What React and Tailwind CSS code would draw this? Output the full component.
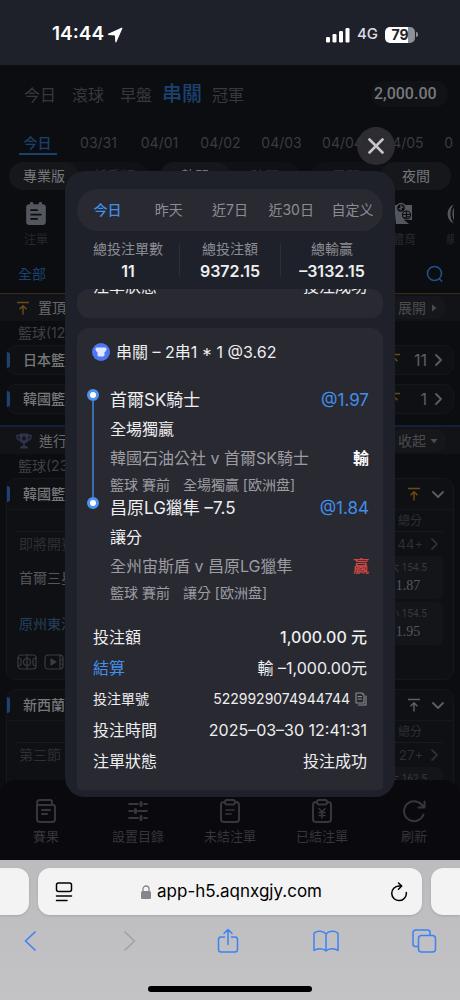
import React from "react";

const stroke = { fill: "none", stroke: "currentColor", strokeLinecap: "round", strokeLinejoin: "round" };

/* ---------- icons ---------- */

function LocationArrow() {
  return (
    <svg viewBox="0 0 16 16" className="h-4 w-4" fill="currentColor" aria-hidden="true">
      <path stroke="currentColor" strokeWidth="1.200" strokeLinejoin="round" d="M14.800 1.200 1.500 7.300l6.900.6.500 6.900z" />
    </svg>
  );
}

function Signal() {
  return (
    <svg viewBox="0 0 24 16" className="h-4 w-6" fill="currentColor" aria-hidden="true">
      <rect x="0" y="10" width="4" height="5.500" rx="1.200" />
      <rect x="6.500" y="7" width="4" height="8.500" rx="1.200" />
      <rect x="13" y="4" width="4" height="11.500" rx="1.200" />
      <rect x="19.500" y="1" width="4" height="14.500" rx="1.200" />
    </svg>
  );
}

function Close() {
  return (
    <svg viewBox="0 0 16 16" className="h-4 w-4" {...stroke} strokeWidth="2.600" aria-hidden="true">
      <path d="M1.500 1.500l13 13M14.500 1.500l-13 13" />
    </svg>
  );
}

function PinTop({ className = "" }) {
  return (
    <svg viewBox="0 0 14 14" className={`h-3.5 w-3.5 ${className}`} {...stroke} strokeLinecap="butt" strokeWidth="1.500" aria-hidden="true">
      <path d="M1 1.500h12M7 13.500V5M3.500 8.200 7 4.700l3.500 3.500" />
    </svg>
  );
}

function Chevron({ dir = "right", className = "" }) {
  const d = dir === "right" ? "M5 2l5 5-5 5" : "M2 5l5 5 5-5";
  return (
    <svg viewBox="0 0 14 14" className={`h-3.5 w-3.5 ${className}`} {...stroke} strokeWidth="1.800" aria-hidden="true">
      <path d={d} />
    </svg>
  );
}

function Trophy() {
  return (
    <svg viewBox="0 0 16 16" className="h-4 w-4 text-[#30344a]" aria-hidden="true">
      <path fill="currentColor" d="M3.500.5h9V6a4.500 4.500 0 0 1-3.600 4.400V13H11l1 2.500H4L5 13h2.100v-2.600A4.500 4.500 0 0 1 3.500 6z" />
      <path {...stroke} strokeWidth="1.400" d="M3.500 2.500H.8C.8 5.500 2 7.200 4 7.400M12.500 2.500h2.700c0 3-1.200 4.700-3.200 4.900" />
      <path fill="#121317" d="M8 2.600l.8 1.700 1.800.2-1.300 1.200.4 1.800L8 6.600l-1.700.9.4-1.800-1.300-1.200 1.800-.2z" />
    </svg>
  );
}

function NoteIcon() {
  return (
    <svg viewBox="0 0 20 22" className="h-6 w-6" aria-hidden="true">
      <rect x="1" y="2" width="18" height="19" rx="3" fill="currentColor" />
      <rect x="4.500" y="0" width="3" height="4" rx="1.200" fill="currentColor" />
      <rect x="12.500" y="0" width="3" height="4" rx="1.200" fill="currentColor" />
      <path {...stroke} stroke="#0b0d11" strokeWidth="1.600" d="M5.500 7.500H11M5.500 11.500h9M5.500 15.500H11" />
    </svg>
  );
}

function EsportsIcon() {
  return (
    <svg viewBox="0 0 24 24" className="h-6 w-6" aria-hidden="true">
      <path fill="currentColor" d="M2 3h18v15h-8l5 4H4z" />
      <circle cx="9" cy="6" r="4.500" fill="#0b0d11" stroke="currentColor" strokeWidth="1.400" />
      <circle cx="14.500" cy="13" r="4" fill="none" stroke="#0b0d11" strokeWidth="1.200" />
      <path {...stroke} stroke="#0b0d11" strokeWidth="1.100" d="M10.500 12.500h8M14.500 9.500v7M12 15.500l5-1" />
      <path {...stroke} strokeWidth="1.200" d="M7 7l4-2M9 3v5" />
    </svg>
  );
}

function TennisIcon() {
  return (
    <svg viewBox="0 0 24 24" className="h-6 w-6" aria-hidden="true">
      <circle cx="12" cy="12" r="10.500" fill="currentColor" />
      <path {...stroke} stroke="#0b0d11" strokeWidth="2" d="M8.500 2.500c-4 6-4 13 0 19M15 2c4 6 4 14 0 20" />
    </svg>
  );
}

function Search() {
  return (
    <svg viewBox="0 0 18 18" className="h-[18px] w-[18px]" {...stroke} strokeWidth="1.600" aria-hidden="true">
      <circle cx="8.500" cy="8.500" r="7" />
      <path d="M13.500 14l2.200 2.200" />
    </svg>
  );
}

function CourtIcon() {
  return (
    <svg viewBox="0 0 20 16" className="h-4 w-5" {...stroke} strokeWidth="1.200" aria-hidden="true">
      <rect x="1" y="1" width="18" height="14" rx="3" />
      <circle cx="10" cy="8" r="3.500" />
      <path d="M10 1v14M1 4.500h1.500a1.500 1.500 0 0 1 1.500 1.500v4a1.500 1.500 0 0 1-1.500 1.500H1M19 4.500h-1.500A1.500 1.500 0 0 0 16 6v4a1.500 1.500 0 0 0 1.500 1.500H19" />
    </svg>
  );
}

function VideoIcon() {
  return (
    <svg viewBox="0 0 20 16" className="h-4 w-5" {...stroke} strokeWidth="1.200" aria-hidden="true">
      <rect x="1" y="1" width="18" height="14" rx="3" />
      <path fill="currentColor" d="M7 5v6l5-3z" />
      <path d="M16 1v14M16 6h3M16 10h3" />
    </svg>
  );
}

function ResultIcon() {
  return (
    <svg viewBox="0 0 24 26" className="h-[26px] w-6" {...stroke} strokeWidth="2" aria-hidden="true">
      <path d="M3 8V5a3 3 0 0 1 3-3h10a2 2 0 0 1 2 2v2" />
      <path d="M3 7h16a2 2 0 0 1 2 2v12a3 3 0 0 1-3 3H6a3 3 0 0 1-3-3zM8 12h8M8 16h5" />
    </svg>
  );
}

function SlidersIcon() {
  return (
    <svg viewBox="0 0 24 26" className="h-[26px] w-6" {...stroke} strokeWidth="1.800" aria-hidden="true">
      <path d="M3 6h9M18 6h3M3 13h4M12 13h9M3 20h9M18 20h3" />
      <path strokeWidth="3" d="M15 4.500v3M9.500 11.500v3M15 18.500v3" />
    </svg>
  );
}

function ClipboardIcon({ yen = false }) {
  return (
    <svg viewBox="0 0 24 26" className="h-[26px] w-6" {...stroke} strokeWidth="2" aria-hidden="true">
      <path d="M7 4H6a3 3 0 0 0-3 3v14a3 3 0 0 0 3 3h12a3 3 0 0 0 3-3V7a3 3 0 0 0-3-3h-1" />
      <rect x="7" y="2" width="10" height="4.500" rx="2" />
      {yen ? <path strokeWidth="1.500" d="M9 10.500l3 3.500 3-3.500M12 14v6M9 14.500h6M9 17.500h6" /> : <path strokeWidth="1.700" d="M8 12h8M8 16h5" />}
    </svg>
  );
}

function RefreshIcon() {
  return (
    <svg viewBox="0 0 24 26" className="h-[26px] w-6" {...stroke} strokeWidth="2" aria-hidden="true">
      <path d="M21.500 16.500A10 10 0 1 1 19.500 6.500L22 9M22.500 3.500V9.500H16.500" />
    </svg>
  );
}

function ParlayBadge() {
  return (
    <svg viewBox="0 0 18 18" className="h-[18px] w-[18px] shrink-0" aria-hidden="true">
      <circle cx="9" cy="9" r="9" fill="#4e75f2" />
      <path fill="#dfe7ff" d="M5 4.500h8c1.200 0 1.900 1 1.500 2l-.6 1.600c-.2.500-.600.800-1.100.800h-.3v3.200c0 .8-.6 1.400-1.400 1.400H6.900c-.8 0-1.400-.6-1.400-1.400V8.900h-.3c-.5 0-.9-.3-1.100-.8L3.500 6.500c-.4-1 .3-2 1.500-2z" />
    </svg>
  );
}

function CopyIcon() {
  return (
    <svg viewBox="0 0 12 14" className="h-3.5 w-3" {...stroke} strokeWidth="1.100" aria-hidden="true">
      <path d="M1 1h6l2 2v8H1zM3 4.500h3.500M3 7h3.500" />
      <path d="M11 4v9H3.500" />
    </svg>
  );
}

/* ---------- page behind the dialog ---------- */

const navItems = ["今日", "滾球", "早盤", "串關", "冠軍"];
const dates = ["今日", "03/31", "04/01", "04/02", "04/03", "04/04", "04/05", "04/06"];
const switches = [
  { options: ["專業版", "新手版"], active: 0 },
  { options: ["熱門", "時間"], active: 0 },
  { options: ["日間", "夜間"], active: 1 },
];

function TopNav() {
  return (
    <header className="flex h-[58px] items-center justify-between pr-3 pl-6">
      <nav className="flex items-baseline text-base leading-6 text-[#38393c]">
        {navItems.map((item) => (
          <button key={item} type="button" className={item === "串關" ? "mr-2.5 -ml-1.5 text-xl font-medium text-[#1b416f]" : "mr-4"}>
            {item}
          </button>
        ))}
      </nav>
      <div className="flex h-[26px] w-[77px] items-center rounded-full bg-[#111216] pl-[3px] [font-family:Roboto,sans-serif] text-base font-medium text-[#77787a]">
        2,000.00
      </div>
    </header>
  );
}

function DateTabs() {
  return (
    <div className="mr-1.5 flex overflow-hidden pl-[7px] text-sm leading-5 text-[#3b3c3f]">
      {dates.map((d, i) => (
        <button key={d} type="button" className="flex w-[61px] shrink-0 justify-center">
          <span className={i === 0 ? "border-b-2 border-[#1b416f] px-[5px] pt-2.5 font-medium text-[#1b416f]" : "pt-2.5"}>{d}</span>
        </button>
      ))}
    </div>
  );
}

function Switches() {
  return (
    <div className="mt-[7px] flex gap-[11px] px-[9px] text-sm">
      {switches.map((s) => (
        <div key={s.options[0]} className="flex h-7 flex-1 rounded-full bg-[#101115]">
          {s.options.map((o, i) => (
            <button key={o} type="button" className={i === s.active ? "flex-1 rounded-full bg-[#16171a] text-[#77787a]" : "flex-1 text-[#2c2d30]"}>
              {o}
            </button>
          ))}
        </div>
      ))}
    </div>
  );
}

function Sports() {
  return (
    <div className="mx-1.5 mt-3 flex overflow-hidden text-xs leading-4 text-[#27282c]">
      <button type="button" className="flex w-[60px] flex-col items-center gap-1.5">
        <span className="text-[#55575f]"><NoteIcon /></span>注單
      </button>
      <div className="-mr-4 ml-auto flex gap-[30px]">
        <button type="button" className="flex flex-col items-center gap-1.5">
          <span className="text-[#55575f]"><EsportsIcon /></span>體育
        </button>
        <button type="button" className="flex flex-col items-center gap-1.5">
          <span className="text-[#55575f]"><TennisIcon /></span>網球
        </button>
      </div>
    </div>
  );
}

function SectionBar({ icon, title, action, arrow }) {
  return (
    <div className="flex h-[27px] items-center bg-[#121317] pr-3.5 pl-4 text-sm text-[#6a6b6e]">
      {icon}
      <span className="ml-[7px]">{title}</span>
      <button type="button" className="ml-auto flex h-[23px] items-center gap-1 rounded-full bg-[#16171b] px-2 text-[#4a4b4e]">
        {action}
        <svg viewBox="0 0 8 8" className="h-2 w-2" fill="currentColor" aria-hidden="true">
          <path d={arrow === "right" ? "M2 0.500v7L6.500 4z" : "M0.500 2h7L4 6.500z"} />
        </svg>
      </button>
    </div>
  );
}

function LeagueHeader({ name, right }) {
  return (
    <div className="flex h-[30px] items-center pr-2 text-sm font-medium text-[#77787a]">
      <span className="h-4 w-[3px] rounded-r-full bg-[#1b4474]" />
      <span className="ml-[13px]">{name}</span>
      <div className="ml-auto flex items-center">{right}</div>
    </div>
  );
}

const cardStyle = "mx-1.5 rounded-[10px] border border-[#16171a] bg-[#0f1014]";

function CollapsedLeague({ name, count }) {
  return (
    <section className={cardStyle}>
      <div className="-my-px">
        <LeagueHeader
          name={name}
          right={
            <>
              <PinTop className="text-[#6b4a14]" />
              <span className="w-[26px] text-right text-base font-normal text-[#5d5e61]">{count}</span>
              <Chevron className="ml-1 text-[#5d5e61]" />
            </>
          }
        />
      </div>
    </section>
  );
}

function OpenLeague({ name, pinColor, period, more, children }) {
  return (
    <section className={cardStyle}>
      <LeagueHeader
        name={name}
        right={
          <>
            <PinTop className={pinColor} />
            <Chevron dir="down" className="ml-2.5 text-[#5d5e61]" />
          </>
        }
      />
      <div className="border-t border-[#16171a] px-2.5 text-[#2e2f32]">
        <div className="flex h-[22px] items-center justify-end border-b border-[#191a1d] text-xs">
          <span className="w-[66px] text-center">總分</span>
        </div>
        <div className="flex h-6 items-center justify-between px-0.5 text-sm">
          <span>{period}</span>
          <span className="flex items-center gap-1 text-[13px]">{more}<Chevron className="text-[#2e2f32]" /></span>
        </div>
        {children}
      </div>
    </section>
  );
}

function Odds({ label, value }) {
  return (
    <button type="button" className="flex h-[43px] w-[66px] flex-col items-center rounded-md bg-[#141518] pt-1 pr-1">
      <span className="[font-family:Roboto,'Noto_Sans_CJK_TC',sans-serif] text-[10px] leading-4 text-[#38393c]">{label}</span>
      {value && <span className="[font-family:'Liberation_Serif',serif] text-sm leading-5 text-[#55565a]">{value}</span>}
    </button>
  );
}

function MatchList() {
  return (
    <main className="min-h-0 flex-1 overflow-hidden border-t border-[#3a2c12]">
      <SectionBar icon={<PinTop className="mr-px text-[#6b4a14]" />} title="置頂" action="展開" arrow="right" />
      <h3 className="flex h-6 items-center pl-[18px] text-sm text-[#3f4043]">籃球(12)</h3>
      <div className="flex flex-col gap-[9px]">
        <CollapsedLeague name="日本籃球" count="11" />
        <CollapsedLeague name="韓國籃球" count="1" />
      </div>
      <div className="mt-[11px] border-t-2 border-[#12203a]">
        <SectionBar icon={<Trophy />} title="進行中" action="收起" arrow="down" />
      </div>
      <h3 className="flex h-6 items-center pl-[18px] text-sm text-[#3f4043]">籃球(23)</h3>
      <div className="flex flex-col gap-[9px]">
        <OpenLeague name="韓國籃球" pinColor="text-[#6b4a14]" period="即將開賽" more="44+">
          <div className="flex justify-between">
            <div className="flex flex-col gap-[3px] pl-0.5 text-sm">
              <span className="flex h-[43px] items-center text-[#55565a]">首爾三星</span>
              <span className="flex h-[43px] items-center text-[#25405c]">原州東浦</span>
            </div>
            <div className="flex flex-col gap-[3px]">
              <Odds label="大 154.5" value="1.87" />
              <Odds label="小 154.5" value="1.95" />
            </div>
          </div>
          <div className="flex gap-[7px] py-[9px] text-[#3a3b3e]">
            <CourtIcon />
            <VideoIcon />
          </div>
        </OpenLeague>
        <OpenLeague name="新西蘭籃球" pinColor="text-[#5d5e61]" period="第三節" more="27+">
          <div className="flex justify-end">
            <Odds label="大 162.5" />
          </div>
        </OpenLeague>
      </div>
    </main>
  );
}

const bottomItems = [
  { label: "賽果", icon: <ResultIcon /> },
  { label: "設置目錄", icon: <SlidersIcon /> },
  { label: "未結注單", icon: <ClipboardIcon /> },
  { label: "已結注單", icon: <ClipboardIcon yen /> },
  { label: "刷新", icon: <RefreshIcon /> },
];

function BottomNav() {
  return (
    <nav className="relative -mt-3 grid h-[80px] shrink-0 grid-cols-5 rounded-t-2xl bg-[#09090e] pt-[18px] text-[13px] leading-5 text-[#36373b]">
      {bottomItems.map((b) => (
        <button key={b.label} type="button" className="flex flex-col items-center gap-0.5">
          {b.icon}
          {b.label}
        </button>
      ))}
    </nav>
  );
}

/* ---------- settled bets dialog ---------- */

const ranges = ["今日", "昨天", "近7日", "近30日", "自定义"];
const totals = [
  { label: "總投注單數", value: "11" },
  { label: "總投注額", value: "9372.15" },
  { label: "總輸贏", value: "–3132.15" },
];
const legs = [
  { pick: "首爾SK騎士", odds: "@1.97", market: "全場獨贏", match: "韓國石油公社 v 首爾SK騎士", result: "輸", tone: "text-white", note: ["籃球 賽前", "全場獨贏 [欧洲盘]"] },
  { pick: "昌原LG獵隼 –7.5", odds: "@1.84", market: "讓分", match: "全州宙斯盾 v 昌原LG獵隼", result: "贏", tone: "text-[#cb4643]", note: ["籃球 賽前", "讓分 [欧洲盘]"] },
];

function Leg({ leg, last }) {
  return (
    <li className="flex gap-[11px]">
      <div className="flex w-3 flex-col items-center">
        <span className="h-3 w-3 shrink-0 rounded-full border-[3px] border-[#4a94ee] bg-white" />
        {!last && <span className="w-0.5 flex-1 bg-[#3a6fae]" />}
      </div>
      <div className="min-w-0 flex-1">
        <div className="flex h-6 items-center justify-between text-[17px] whitespace-nowrap text-[#eeeeef]">
          {leg.pick}
          <span className="text-[#428ee9]">{leg.odds}</span>
        </div>
        <div className="flex h-8 items-center text-[#eeeeef]">{leg.market}</div>
        <div className="flex h-[26px] items-center justify-between whitespace-nowrap text-[#9c9ca1]">
          {leg.match}
          <b className={`font-bold ${leg.tone}`}>{leg.result}</b>
        </div>
        <div className="flex h-[26px] items-center gap-[13px] pt-0.5 text-sm text-[#9c9ca1]">
          {leg.note.map((n) => (
            <span key={n}>{n}</span>
          ))}
        </div>
      </div>
    </li>
  );
}

function Field({ label, children, className = "" }) {
  return (
    <div className={`flex h-[31px] items-center justify-between whitespace-nowrap ${className}`}>
      <dt>{label}</dt>
      <dd>{children}</dd>
    </div>
  );
}

function BetDialog() {
  return (
    <div className="absolute inset-0 flex flex-col px-[65px] pt-[62px] pb-[63px]">
      <button type="button" aria-label="關閉" className="flex h-[38px] w-[38px] shrink-0 items-center justify-center self-end rounded-full bg-[#303035]/90 text-[#c6c6c8]">
        <Close />
      </button>
      <section role="dialog" aria-label="已結注單" className="mt-1.5 flex min-h-0 flex-1 flex-col rounded-[20px] bg-[#1e2129] px-3 pt-[18px] pb-[7px] text-base">
        <div className="grid h-[42px] shrink-0 grid-cols-5 rounded-full bg-[#292932] text-sm text-[#8c8d93]">
          {ranges.map((r, i) => (
            <button key={r} type="button" className={i === 0 ? "font-medium text-[#428ee9]" : ""}>{r}</button>
          ))}
        </div>
        <dl className="mt-[7px] grid shrink-0 grid-cols-3 text-center">
          {totals.map((t, i) => (
            <div key={t.label} className={i === 1 ? "my-1.5 border-x border-[#2c2f37]" : "my-1.5"}>
              <dt className="-mt-1.5 text-sm leading-[22px] text-[#8c8d93]">{t.label}</dt>
              <dd className="-mb-1.5 leading-[22px] font-semibold text-[#eeeeef]">{t.value}</dd>
            </div>
          ))}
        </dl>
        <div className="mt-[7px] flex min-h-0 flex-1 flex-col justify-end overflow-hidden rounded-t-xl rounded-b-sm text-[#eeeeef]">
          <article className="shrink-0 rounded-xl bg-[#292932] px-4 pb-[17px]">
            <dl>
              <Field label="注單狀態">投注成功</Field>
            </dl>
          </article>
          <article className="mt-2.5 shrink-0 rounded-t-xl bg-[#292932] pt-3 pb-3.5">
            <h2 className="flex h-6 items-center gap-1.5 px-[15px] whitespace-nowrap">
              <ParlayBadge />
              串關 – 2串1 * 1 @3.62
            </h2>
            <ol className="mt-[25px] pr-[14px] pl-2.5">
              {legs.map((leg, i) => (
                <Leg key={leg.pick} leg={leg} last={i === legs.length - 1} />
              ))}
            </ol>
            <dl className="mt-4 px-4">
              <Field label="投注額"><span className="font-medium">1,000.00 元</span></Field>
              <Field label={<span className="text-[#428ee9]">結算</span>}>輸 –1,000.00元</Field>
              <Field label="投注單號" className="text-sm">
                <span className="flex items-center gap-[5px]">
                  5229929074944744
                  <button type="button" aria-label="複製" className="text-[#8c8d93]"><CopyIcon /></button>
                </span>
              </Field>
              <Field label="投注時間">2025–03–30 12:41:31</Field>
              <Field label="注單狀態">投注成功</Field>
            </dl>
          </article>
        </div>
      </section>
    </div>
  );
}

/* ---------- device and browser chrome ---------- */

function StatusBar() {
  return (
    <div className="flex h-[65px] shrink-0 items-center justify-between bg-[#1e2129] pt-1 pr-[42px] pl-[52px] text-white">
      <div className="flex items-center gap-[3px] text-[19px] font-semibold">
        14:44
        <LocationArrow />
      </div>
      <div className="flex items-center gap-[7px]">
        <Signal />
        <span className="text-[15px] font-medium text-[#dcdde0]">4G</span>
        <div className="flex items-center gap-px">
          <div className="flex h-4 w-[30px] items-center justify-center rounded-[5px] bg-linear-to-r from-white from-78% to-[#8e9095] to-78% text-sm font-bold text-[#1e2129]">
            79
          </div>
          <span className="h-[5px] w-0.5 rounded-r-full bg-[#8e9095]" />
        </div>
      </div>
    </div>
  );
}

function BrowserBar() {
  return (
    <footer className="shrink-0 bg-linear-to-b from-[#bcbcbf] to-[#c3c3c5] pt-2 pb-2">
      <div className="flex h-[47px] gap-[9px]">
        <div className="w-[29px] rounded-r-xl bg-[#f3f3f3] shadow" />
        <div className="flex flex-1 items-center justify-between rounded-xl bg-[#f3f3f3] pr-3.5 pl-[17px] text-black shadow">
          <button type="button" aria-label="頁面設定">
            <svg viewBox="0 0 18 20" className="h-5 w-[18px]" {...stroke} strokeWidth="1.500" aria-hidden="true">
              <rect x="1.500" y="1" width="15" height="8.500" rx="2" />
              <path d="M1.500 14h15M1.500 18.500h10.500" />
            </svg>
          </button>
          <button type="button" className="flex items-center gap-1.5 text-[17px]">
            <svg viewBox="0 0 10 14" className="h-3.5 w-2.5 text-[#86868a]" aria-hidden="true">
              <rect x="0" y="6" width="10" height="8" rx="1.500" fill="currentColor" />
              <path fill="none" stroke="currentColor" strokeWidth="1.300" d="M2 6.500V4a3 3 0 0 1 6 0v2.500" />
            </svg>
            app-h5.aqnxgjy.com
          </button>
          <button type="button" aria-label="重新載入">
            <svg viewBox="0 0 18 20" className="h-5 w-[18px]" {...stroke} strokeWidth="1.500" aria-hidden="true">
              <path d="M16.300 10.500A7.300 7.300 0 1 1 9 4h2.500M8.500 1l3.200 3-3.200 3.200" />
            </svg>
          </button>
        </div>
        <div className="w-[29px] rounded-l-xl bg-[#f3f3f3] shadow" />
      </div>
      <nav className="mt-[13px] flex h-[26px] items-center justify-between pr-[23px] pl-[18px] text-[#3f80f4]">
        <button type="button" aria-label="上一頁">
          <svg viewBox="0 0 26 26" className="h-[26px] w-[26px]" {...stroke} strokeWidth="1.700" aria-hidden="true"><path d="M17 4 7.500 13l9.500 9" /></svg>
        </button>
        <button type="button" aria-label="下一頁" disabled className="text-[#a2a2a5]">
          <svg viewBox="0 0 26 26" className="h-[26px] w-[26px]" {...stroke} strokeWidth="1.700" aria-hidden="true"><path d="M9 4l9.500 9L9 22" /></svg>
        </button>
        <button type="button" aria-label="分享">
          <svg viewBox="0 0 26 26" className="h-[26px] w-[26px]" {...stroke} strokeWidth="1.500" aria-hidden="true">
            <path d="M9.500 9H6a2.500 2.500 0 0 0-2.500 2.500v10A2.500 2.500 0 0 0 6 24h14a2.500 2.500 0 0 0 2.500-2.500v-10A2.500 2.500 0 0 0 20 9h-3.500M13 16.500V1.500M9 5.500l4-4 4 4" />
          </svg>
        </button>
        <button type="button" aria-label="書籤">
          <svg viewBox="0 0 26 26" className="h-[26px] w-[26px]" {...stroke} strokeWidth="1.500" aria-hidden="true">
            <path d="M13 6C10.500 2.800 4.500 2.500 1.500 4.800a1.500 1.500 0 0 0-.5 1.200v16.500c3-2.300 9.500-2.300 12 .5 2.500-2.800 9-2.800 12-.5V6a1.500 1.500 0 0 0-.5-1.200C21.500 2.500 15.500 2.800 13 6zM13 6v17" />
          </svg>
        </button>
        <button type="button" aria-label="分頁">
          <svg viewBox="0 0 26 26" className="h-[26px] w-[26px]" {...stroke} strokeWidth="1.500" aria-hidden="true">
            <rect x="7.500" y="7.500" width="17" height="16.500" rx="3" />
            <path d="M7 18.500H4.500A2.500 2.500 0 0 1 2 16V5a3 3 0 0 1 3-3h11.500a2.500 2.500 0 0 1 2.500 2.500V7" />
          </svg>
        </button>
      </nav>
      <div className="mx-auto mt-8 h-1.5 w-[164px] rounded-full bg-black" />
    </footer>
  );
}

export default function App() {
  return (
    <div className="flex h-screen flex-col overflow-hidden bg-[#0b0d11] [font-family:Inter,'Noto_Sans_CJK_TC',sans-serif]">
      <StatusBar />
      <div className="relative flex min-h-0 flex-1 flex-col">
        <TopNav />
        <DateTabs />
        <Switches />
        <Sports />
        <div className="mt-[9px] flex h-9 items-center justify-between px-[18px] pb-0.5 text-sm text-[#1b416f]">
          <button type="button">全部</button>
          <button type="button" aria-label="搜尋" className="-mr-0.5 text-[#205189]"><Search /></button>
        </div>
        <MatchList />
        <BottomNav />
        <BetDialog />
      </div>
      <BrowserBar />
    </div>
  );
}
